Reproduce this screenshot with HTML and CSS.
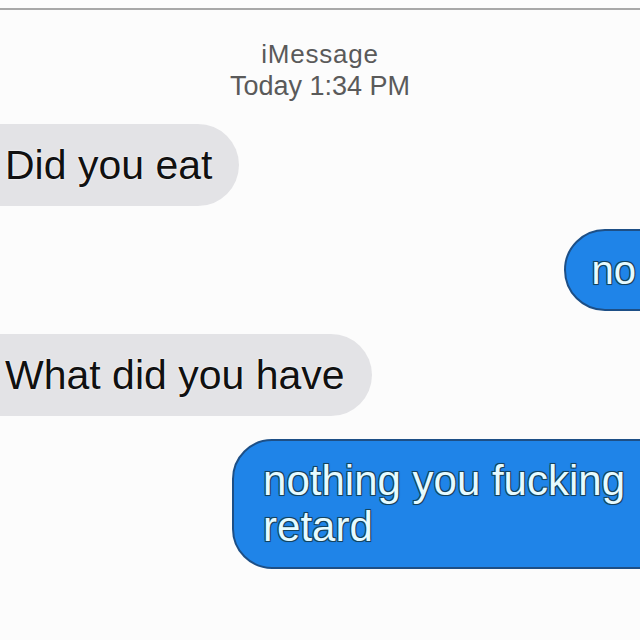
FILE: index.html
```html
<!DOCTYPE html>
<html>
<head>
<meta charset="utf-8">
<link rel="stylesheet" href="styles.css">
</head>
<body>
<div class="screen">
  <div class="topline"></div>
  <div class="header">
    <div class="service">iMessage</div>
    <div class="time">Today 1:34 PM</div>
  </div>
  <div class="thread">
    <div class="msg in">Did you eat</div>
    <div class="msg out short">no</div>
    <div class="msg in">What did you have</div>
    <div class="msg out long">nothing you fucking<br>retard</div>
  </div>
</div>
</body>
</html>
```
FILE: styles.css
```css
html, body {
  margin: 0;
  padding: 0;
  background: #fcfcfc;
}
.screen {
  width: 640px;
  height: 640px;
  overflow: hidden;
  font-family: "Liberation Sans", Arial, sans-serif;
}
.topline {
  margin-top: 8px;
  height: 2px;
  background: #a8a8a8;
}
.header {
  padding-top: 28px;
  text-align: center;
  font-size: 27px;
  line-height: 32px;
  color: #5a5a5a;
}
.service {
  font-size: 26px;
  letter-spacing: 0.8px;
}
.thread {
  margin-top: 22px;
  display: flex;
  flex-direction: column;
  gap: 23px;
}
.msg {
  font-size: 41px;
  line-height: 46px;
  padding-top: 18px;
  padding-bottom: 18px;
  border-radius: 41px;
  white-space: nowrap;
}
.in {
  align-self: flex-start;
  margin-left: -40px;
  padding-left: 45px;
  padding-right: 27px;
  background: #e3e3e6;
  color: #111;
  text-shadow: 0 0 2px #fff, 0 0 1px #fff;
}
.out {
  align-self: flex-end;
  margin-right: -40px;
  background: #1f84e8;
  color: #e6fbff;
  border: 2px solid #1d4f86;
  text-shadow: 1px 1px 0 #14435f, -1px -1px 0 #14435f, 1px -1px 0 #14435f, -1px 1px 0 #14435f, 0 0 2px #0f3b55;
}
.short {
  padding: 16px 42px 16px 26px;
  font-size: 40px;
}
.long {
  padding: 17px 53px 17px 29px;
  font-size: 42px;
  border-radius: 40px;
}
```
